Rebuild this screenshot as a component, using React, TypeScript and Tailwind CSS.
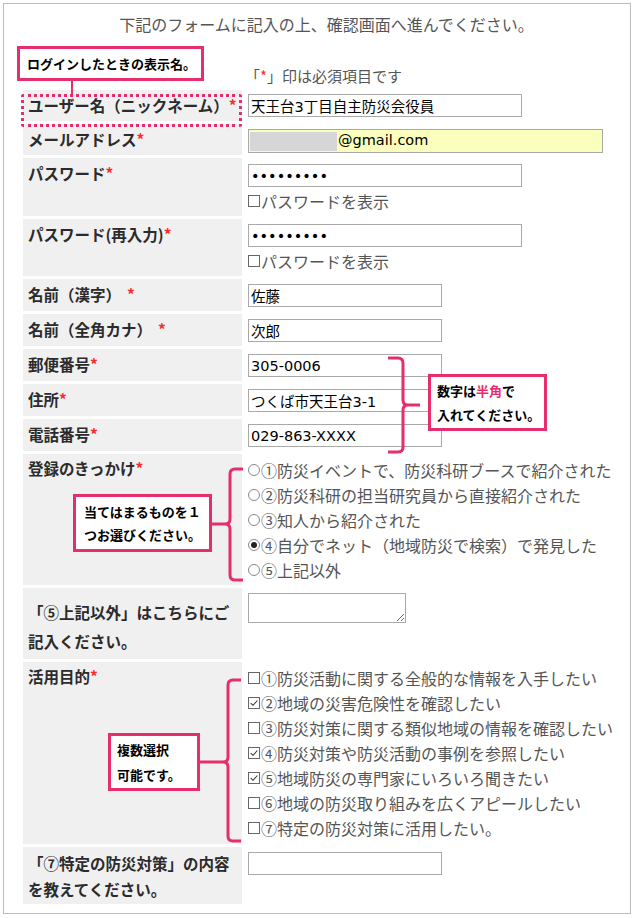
import type { ReactNode } from "react";

const CJK = { fontFamily: '"Noto Sans CJK JP", "Noto Sans", sans-serif' };

function Req() {
  return <span className="font-bold text-[#ff2b2b]">*</span>;
}

function Radio({ checked }: { checked?: boolean }) {
  return (
    <span className="mr-px inline-flex h-[12px] w-[12px] shrink-0 items-center justify-center rounded-full border border-[#8a8a8a] bg-white">
      {checked && <span className="h-[6px] w-[6px] rounded-full bg-[#222]" />}
    </span>
  );
}

function Check({ checked }: { checked?: boolean }) {
  return (
    <span className="mr-px inline-flex h-[12px] w-[12px] shrink-0 items-center justify-center border border-[#666] bg-white">
      {checked && (
        <svg viewBox="0 0 12 12" className="h-[10px] w-[10px]">
          <path d="M2 6.2 L4.8 8.8 L10 3" fill="none" stroke="#333" strokeWidth="1.3" />
        </svg>
      )}
    </span>
  );
}

function Field({ value, className, type = "text" }: { value?: string; className: string; type?: string }) {
  return (
    <input
      type={type}
      readOnly
      value={value ?? ""}
      className={`block border border-[#a9a9a9] bg-white pl-[2px] text-[14.5px] text-black outline-none ${className}`}
    />
  );
}

function Row({
  h,
  label,
  children,
  labelClass = "pt-[5px]",
  valueClass = "pt-[5px]",
}: {
  h: string;
  label: ReactNode;
  children: ReactNode;
  labelClass?: string;
  valueClass?: string;
}) {
  return (
    <div className={`flex ${h}`}>
      <div className={`w-[219px] shrink-0 bg-[#f0f0f0] px-[5px] text-[15.5px] font-bold leading-[20px] text-[#2b2b2b] ${labelClass}`} style={CJK}>
        {label}
      </div>
      <div className={`flex-1 pl-[6px] ${valueClass}`}>{children}</div>
    </div>
  );
}

const reasons = [
  "①防災イベントで、防災科研ブースで紹介された",
  "②防災科研の担当研究員から直接紹介された",
  "③知人から紹介された",
  "④自分でネット（地域防災で検索）で発見した",
  "⑤上記以外",
];

const purposes: [string, boolean][] = [
  ["①防災活動に関する全般的な情報を入手したい", false],
  ["②地域の災害危険性を確認したい", true],
  ["③防災対策に関する類似地域の情報を確認したい", false],
  ["④防災対策や防災活動の事例を参照したい", true],
  ["⑤地域防災の専門家にいろいろ聞きたい", true],
  ["⑥地域の防災取り組みを広くアピールしたい", false],
  ["⑦特定の防災対策に活用したい。", false],
];

function ShowPassword() {
  return (
    <div className="mt-[4px] flex items-center text-[16px] leading-[20px] text-[#555]" style={CJK}>
      <Check />
      パスワードを表示
    </div>
  );
}

export default function App() {
  return (
    <div
      className="relative h-[918px] w-[633px] bg-white"
      style={{ fontFamily: '"DejaVu Sans", "Noto Sans CJK JP", sans-serif' }}
    >
      <div className="ml-[3px] mt-[3px] h-[911px] w-[628px] border border-[#bdbdbd] pl-[19px] pt-[8px]">
        <p className="text-center text-[16px] leading-[24px] text-[#555]" style={CJK}>
          下記のフォームに記入の上、確認画面へ進んでください。
        </p>
        <p className="ml-[222px] mt-[29px] text-[15px] leading-[22px] text-[#555]" style={CJK}>
          「<span className="text-[#ff2b2b]">*</span>」印は必須項目です
        </p>

        <div className="mt-[3px] flex w-[592px] flex-col gap-[3px]">
          <Row h="h-[31px]" label={<>ユーザー名（ニックネーム）<Req /></>} valueClass="pt-[4px]">
            <Field value="天王台3丁目自主防災会役員" className="h-[23px] w-[274px]" />
          </Row>

          <Row h="h-[31px]" label={<>メールアドレス<Req /></>}>
            <div className="flex h-[24px] w-[355px] items-center border border-[#a9a9a9] bg-[#faffbd] pl-px text-[14.5px] text-black">
              <span className="mr-px h-[19px] w-[87px] bg-[#d6d6d6]" />
              @gmail.com
            </div>
          </Row>

          <Row h="h-[58px]" label={<>パスワード<Req /></>} valueClass="pt-[6px]">
            <Field type="password" value="aaaaaaaaa" className="h-[23px] w-[274px]" />
            <ShowPassword />
          </Row>

          <Row h="h-[57px]" label={<>パスワード(再入力)<Req /></>}>
            <Field type="password" value="aaaaaaaaa" className="h-[23px] w-[274px]" />
            <ShowPassword />
          </Row>

          <Row h="h-[32px]" label={<>名前（漢字）<span className="ml-[6px]"><Req /></span></>}>
            <Field value="佐藤" className="h-[23px] w-[194px]" />
          </Row>

          <Row h="h-[32px]" label={<>名前（全角カナ）<span className="ml-[6px]"><Req /></span></>}>
            <Field value="次郎" className="h-[23px] w-[194px]" />
          </Row>

          <Row h="h-[32px]" label={<>郵便番号<Req /></>}>
            <Field value="305-0006" className="h-[23px] w-[194px]" />
          </Row>

          <Row h="h-[32px]" label={<>住所<Req /></>}>
            <Field value="つくば市天王台3-1" className="h-[23px] w-[194px]" />
          </Row>

          <Row h="h-[32px]" label={<>電話番号<Req /></>}>
            <Field value="029-863-XXXX" className="h-[23px] w-[194px]" />
          </Row>

          <Row h="h-[131px]" label={<>登録のきっかけ<Req /></>} labelClass="pt-[4px]" valueClass="pt-[3px]">
            <div style={CJK}>
              {reasons.map((r, i) => (
                <div key={r} className="flex h-[25px] items-center text-[16px] text-[#555]">
                  <Radio checked={i === 3} />
                  {r}
                </div>
              ))}
            </div>
          </Row>

          <Row
            h="h-[71px]"
            label={<>「⑤上記以外」はこちらにご<br />記入ください。</>}
            labelClass="flex flex-col justify-center pt-[6px] leading-[29px]"
          >
            <textarea readOnly className="block h-[30px] w-[158px] border border-[#a9a9a9] bg-white outline-none" />
          </Row>

          <Row h="h-[182px]" label={<>活用目的<Req /></>} labelClass="pt-[4px]" valueClass="pt-[3px]">
            <div style={CJK}>
              {purposes.map(([p, c]) => (
                <div key={p} className="flex h-[25px] items-center text-[16px] text-[#555]">
                  <Check checked={c} />
                  {p}
                </div>
              ))}
            </div>
          </Row>

          <Row
            h="h-[57px]"
            label={<>「⑦特定の防災対策」の内容<br />を教えてください。</>}
            labelClass="flex flex-col justify-center leading-[26px]"
          >
            <Field className="h-[23px] w-[194px]" />
          </Row>
        </div>
      </div>

      {/* callouts */}
      <div
        className="absolute left-[17px] top-[43px] flex h-[35px] w-[187px] items-center border-[3px] border-[#e62e6e] bg-white pl-[7px] text-[13px] font-bold text-black"
        style={CJK}
      >
        ログインしたときの表示名。
      </div>
      <div className="absolute left-[71px] top-[78px] h-[13px] w-[2px] bg-[#e62e6e]" />
      <div className="absolute left-[21px] top-[91px] h-[33px] w-[221px] rounded-[3px] border-[3px] border-dotted border-[#e62e6e]" />

      <div
        className="absolute left-[428px] top-[371px] flex h-[57px] w-[119px] flex-col justify-center border-[3px] border-[#e62e6e] bg-white pl-[6px] text-[13px] font-bold leading-[24px] text-black"
        style={CJK}
      >
        <span>
          数字は<span className="text-[#e62e6e]">半角</span>で
        </span>
        <span>入れてください。</span>
      </div>

      <div
        className="absolute left-[73px] top-[491px] flex h-[58px] w-[139px] flex-col justify-center border-[3px] border-[#e62e6e] bg-white pl-[8px] text-[13px] font-bold leading-[23px] text-black"
        style={CJK}
      >
        <span>当てはまるものを１</span>
        <span>つお選びください。</span>
      </div>

      <div
        className="absolute left-[108px] top-[730px] flex h-[58px] w-[92px] flex-col justify-center border-[3px] border-[#e62e6e] bg-white pl-[6px] text-[13px] font-bold leading-[25px] text-black"
        style={CJK}
      >
        <span>複数選択</span>
        <span>可能です。</span>
      </div>

      <svg className="pointer-events-none absolute left-0 top-0 h-[918px] w-[633px]" viewBox="0 0 633 918">
        <g fill="none" stroke="#e62e6e" strokeWidth="3">
          <path d="M388 355 H398 Q403 355 403 360 V397 Q403 402 408 402 H420 M408 402 Q403 402 403 407 V444 Q403 449 398 449 H388" />
          <path d="M243 466 H235 Q230 466 230 471 V516 Q230 521 225 521 H212 M225 521 Q230 521 230 526 V572 Q230 577 235 577 H243" />
          <path d="M241 677 H233 Q228 677 228 682 V754 Q228 759 223 759 H200 M223 759 Q228 759 228 764 V833 Q228 838 233 838 H241" />
        </g>
      </svg>
    </div>
  );
}
